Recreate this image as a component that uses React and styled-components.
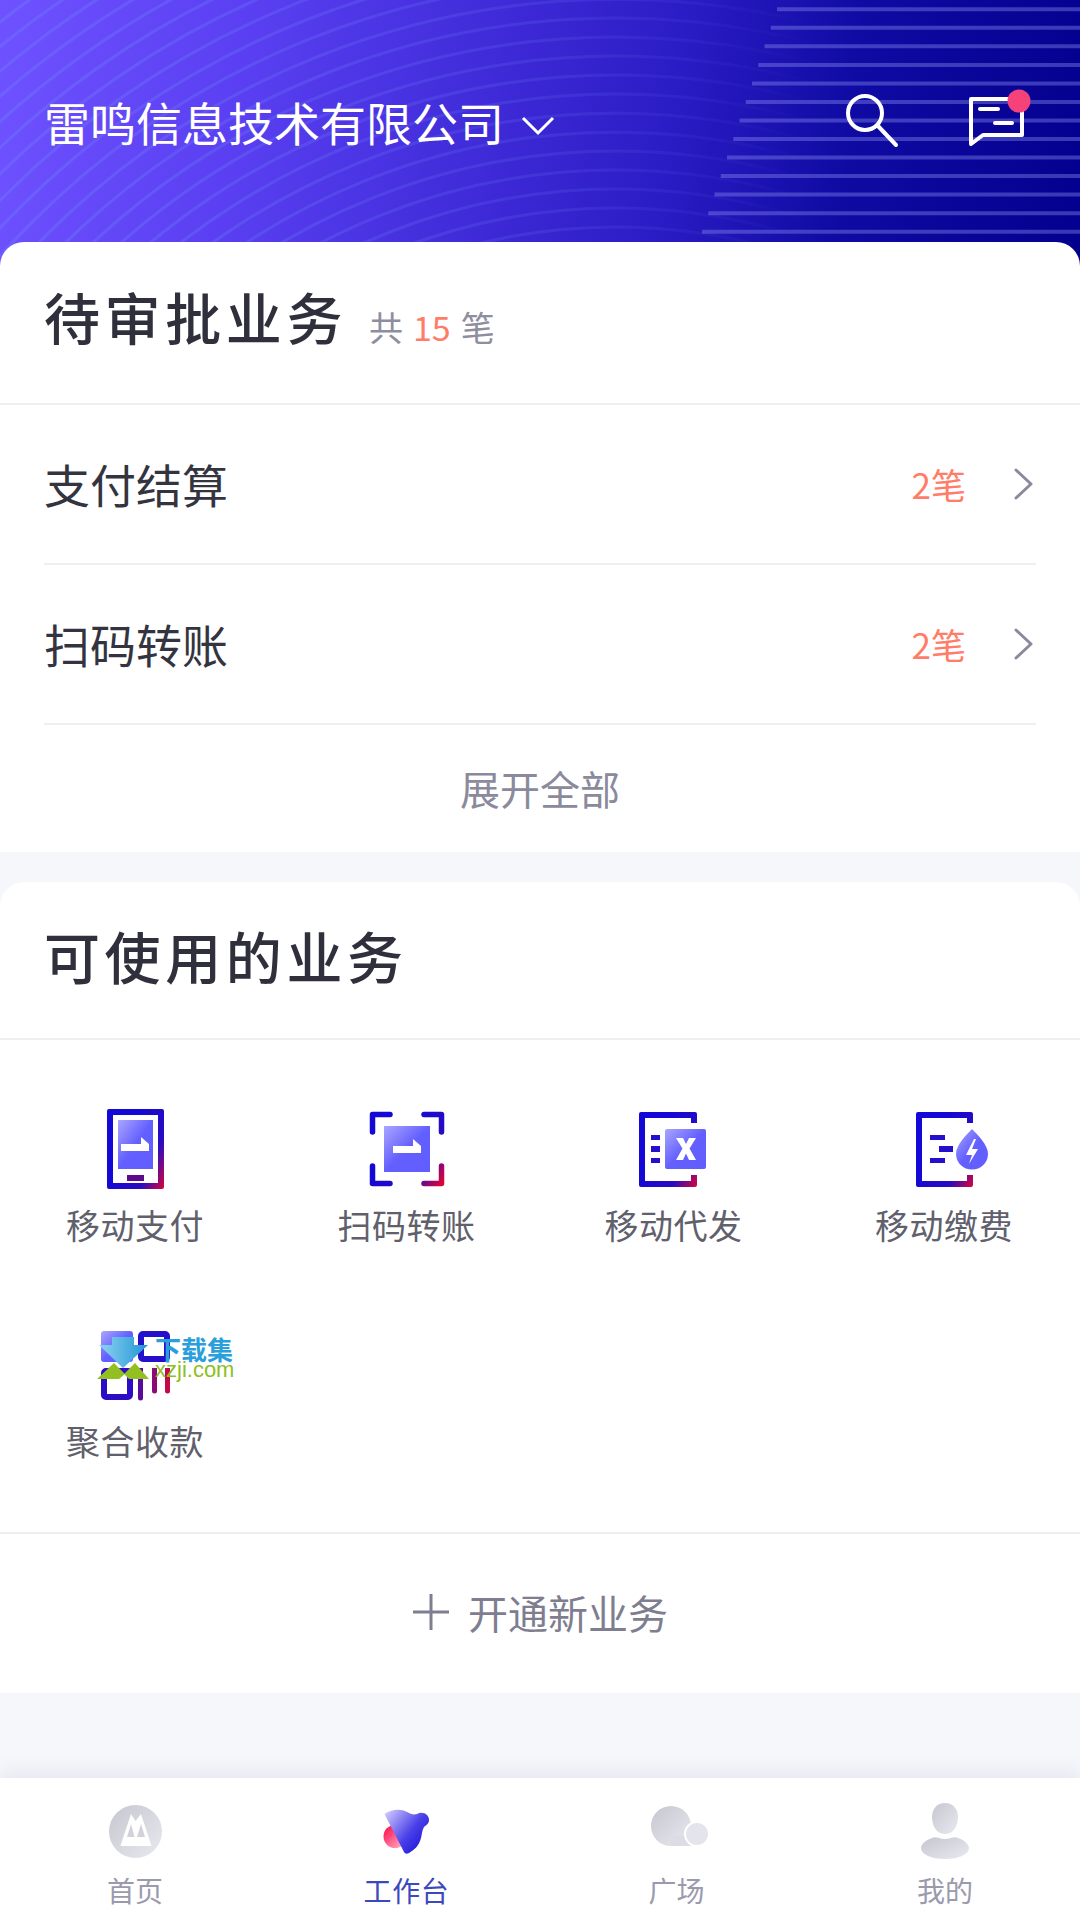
import React from "react";
import styled, { createGlobalStyle } from "styled-components";

const Global = createGlobalStyle`
  html, body { margin: 0; padding: 0; background: #f6f7fb; }
  * { box-sizing: border-box; }
  body { font-family: "Noto Sans CJK SC", "Noto Sans", sans-serif; }
`;

const Page = styled.div`
  width: 1080px;
  height: 1920px;
  overflow: hidden;
  display: flex;
  flex-direction: column;
  background: #f6f7fb;
`;

const Hero = styled.header`
  position: relative;
  height: 266px;
  flex: none;
  margin-bottom: -24px;
  padding: 0 44px;
  display: flex;
  align-items: flex-start;
  justify-content: space-between;
  background: linear-gradient(98deg, #6f52ff 0%, #5a40f2 22%, #3f2bd8 45%, #2a1cc4 62%, #0f0aa2 78%, #04008e 100%);
`;

const HeroArt = styled.svg`
  position: absolute;
  inset: 0;
  width: 1080px;
  height: 266px;
`;

const CompanyButton = styled.div`
  position: relative;
  height: 242px;
  display: flex;
  align-items: center;
  gap: 17px;
  color: #fff;
  font-size: 46px;
  line-height: 56px;
`;

const CompanyChevron = styled.svg`
  margin-top: 10px;
`;

const HeroActions = styled.div`
  position: relative;
  margin-top: 91px;
  display: flex;
  align-items: flex-start;
  gap: 61px;
`;

const ActionIcon = styled.svg`
  display: block;
  overflow: visible;
`;

const Card = styled.section`
  position: relative;
  flex: none;
  background: #fff;
  border-radius: 24px 24px 0 0;
`;

const SecondCard = styled(Card)`
  margin-top: 30px;
`;

const CardHead = styled.div`
  height: ${(p) => p.$h}px;
  padding: 0 44px ${(p) => p.$pb}px;
  display: flex;
  align-items: center;
  gap: 22px;
  border-bottom: 2px solid #eeeef3;
`;

const CardTitle = styled.h2`
  margin: 0;
  font-size: 56px;
  line-height: 70px;
  font-weight: 500;
  letter-spacing: 4.600px;
  color: #2f303b;
`;

const CountText = styled.div`
  padding-top: 21px;
  display: flex;
  gap: 10px;
  font-size: 34px;
  line-height: 44px;
  color: #8e8ea0;
`;

const CountNum = styled.span`
  color: #ff7d68;
`;

const Row = styled.div`
  height: 160px;
  margin: 0 44px;
  padding-bottom: 2px;
  display: flex;
  align-items: center;
  justify-content: space-between;
  border-bottom: 2px solid #eeeef3;
`;

const RowLabel = styled.div`
  font-size: 46px;
  line-height: 60px;
  color: #33343f;
`;

const RowMeta = styled.div`
  display: flex;
  align-items: center;
  gap: 47px;
  padding-right: 1px;
  font-size: 35px;
  color: #ff7d68;
`;

const RowChevron = styled.svg`
  margin-top: 2px;
`;

const Expand = styled.div`
  height: 127px;
  padding-bottom: 2px;
  display: flex;
  align-items: center;
  justify-content: center;
  font-size: 40px;
  color: #8a8a9c;
`;

const Grid = styled.div`
  height: 494px;
  padding-top: 64px;
  display: grid;
  grid-template-columns: 270px 273px 261px 280px;
  grid-auto-rows: 216px;
  align-content: start;
  border-bottom: 2px solid #eeeef3;
`;

const Tile = styled.div`
  position: relative;
  display: flex;
  flex-direction: column;
  align-items: center;
  font-size: 34px;
  line-height: 44px;
  letter-spacing: 0.500px;
  color: #5f606c;
`;

const TileIcon = styled.svg`
  width: 90px;
  height: 90px;
  margin-bottom: 9px;
`;

const OpenNew = styled.div`
  height: 159px;
  padding-bottom: 3px;
  display: flex;
  align-items: center;
  justify-content: center;
  gap: 18px;
  font-size: 40px;
  color: #7e7e90;
`;

const Spacer = styled.div`
  flex: 1;
`;

const TabBar = styled.nav`
  position: relative;
  flex: none;
  height: 142px;
  display: grid;
  grid-template-columns: 270px 273px 267px 270px;
  background: #fff;
  box-shadow: 0 -6px 18px rgba(120, 120, 170, 0.13);
`;

const Tab = styled.div`
  display: flex;
  flex-direction: column;
  align-items: center;
  padding-top: 22px;
  font-size: 28px;
  line-height: 36px;
  letter-spacing: ${(p) => (p.$active ? "0.600px" : "0")};
  color: ${(p) => (p.$active ? "#3c48bd" : "#9a9aac")};
`;

const TabIcon = styled.svg`
  width: 70px;
  height: 64px;
  margin-bottom: 8px;
`;

const WatermarkArt = styled.svg`
  position: absolute;
  left: 97px;
  top: 17px;
  width: 52px;
  height: 42px;
`;

const WatermarkText = styled.div`
  position: absolute;
  left: 155px;
  top: 17px;
  display: flex;
  flex-direction: column;
  align-items: flex-start;
`;

const WatermarkCn = styled.span`
  font-size: 26px;
  line-height: 24px;
  font-weight: 700;
  letter-spacing: 0;
  color: #2a9fdc;
`;

const WatermarkEn = styled.span`
  font-family: "Liberation Sans", sans-serif;
  font-size: 22px;
  line-height: 18px;
  letter-spacing: 0;
  color: #8dbf1f;
`;

const lineRows = Array.from({ length: 13 }, (_, i) => ({ y: 9.300 + i * 18.530, x: 777 - i * 6.250 }));
const arcs = Array.from({ length: 40 }, (_, i) => 540 + i * 19);

const Hook = ({ x, y }) => (
  <path d={`M${x} ${y}h28v-7l-8-7v7h-20z`} fill="#fff" />
);

const Defs = ({ id }) => (
  <defs>
    <linearGradient id={`${id}s`} x1="0.25" y1="0.5" x2="1" y2="1">
      <stop offset="0" stopColor="#1408d6" />
      <stop offset="0.6" stopColor="#2a0cc0" />
      <stop offset="1" stopColor="#d9053a" />
    </linearGradient>
    <linearGradient id={`${id}f`} x1="0" y1="0" x2="1" y2="1">
      <stop offset="0" stopColor="#aaa6ff" />
      <stop offset="0.5" stopColor="#6460ff" />
      <stop offset="1" stopColor="#605cff" />
    </linearGradient>
  </defs>
);

const PhoneIcon = () => (
  <TileIcon viewBox="0 0 90 90">
    <Defs id="a" />
    <path d="M17 7a2 2 0 0 1 2-2h53a2 2 0 0 1 2 2v76a2 2 0 0 1-2 2H19a2 2 0 0 1-2-2z M23 11v68h45V11z" fill="url(#as)" fillRule="evenodd" />
    <rect x="28" y="16" width="35" height="49" fill="url(#af)" />
    <Hook x="31" y="47" />
    <rect x="37" y="71" width="17" height="6" fill="#5c0a90" />
  </TileIcon>
);

const ScanIcon = () => (
  <TileIcon viewBox="0 0 90 90">
    <Defs id="b" />
    <path d="M28 10.500H10.500V28M62 10.500H79.500V28M10.500 62V79.500H28M62 79.500H79.500V62" fill="none" stroke="url(#bs)" strokeWidth="5.500" strokeLinecap="round" strokeLinejoin="round" />
    <rect x="22" y="22" width="46" height="46" fill="url(#bf)" />
    <Hook x="31" y="49" />
  </TileIcon>
);

const DocIcon = () => (
  <TileIcon viewBox="0 0 90 90">
    <Defs id="c" />
    <path d="M10 10a2 2 0 0 1 2-2h54a2 2 0 0 1 2 2v9h-6V14H16v63h46v-6h6v10a2 2 0 0 1-2 2H12a2 2 0 0 1-2-2z" fill="url(#cs)" />
    <rect x="36" y="25" width="41" height="40" rx="2" fill="url(#cf)" />
    <path d="M47 34h7l3 6 3-6h7l-6.500 10.500L67 56h-7l-3-6.500L54 56h-7l6.500-11.500z" fill="#fff" />
    <path d="M22 31h9v5h-9zM22 42h9v6h-9zM22 54h9v5h-9z" fill="#2410cc" />
  </TileIcon>
);

const FeeIcon = () => (
  <TileIcon viewBox="0 0 90 90">
    <Defs id="d" />
    <path d="M17 10a2 2 0 0 1 2-2h53a2 2 0 0 1 2 2v9h-6V14H23v63h45v-6h6v10a2 2 0 0 1-2 2H19a2 2 0 0 1-2-2z" fill="url(#ds)" />
    <path d="M31 31h15v5H31zM40 42h14v6H40zM31 54h15v5H31z" fill="#2410cc" />
    <path d="M73 25c6 6 16 16 16 25a16 15.500 0 0 1-32 0c0-9 10-19 16-25z" fill="url(#df)" />
    <path d="M75 35l-8 16h6l-3 9 9-15h-6l4-10z" fill="#fff" />
  </TileIcon>
);

const MergeIcon = () => (
  <TileIcon viewBox="0 0 90 90">
    <Defs id="e" />
    <rect x="11" y="11" width="32" height="31" rx="3" fill="url(#ef)" />
    <rect x="51" y="14" width="26" height="25" rx="2" fill="none" stroke="#2410cc" strokeWidth="6" />
    <rect x="14" y="51" width="26" height="26" rx="2" fill="none" stroke="#2c0cc4" strokeWidth="6" />
    <path d="M48 48h5v30a2.500 2.500 0 0 1-5 0z" fill="#5a0a9a" />
    <path d="M62 48h5v23a2.500 2.500 0 0 1-5 0z" fill="#8a0a78" />
    <path d="M75 48h5v23a2.500 2.500 0 0 1-5 0z" fill="#c40848" />
  </TileIcon>
);

const tiles = [
  { label: "移动支付", Icon: PhoneIcon },
  { label: "扫码转账", Icon: ScanIcon },
  { label: "移动代发", Icon: DocIcon },
  { label: "移动缴费", Icon: FeeIcon },
];

const Chevron = () => (
  <RowChevron width="22" height="34" viewBox="0 0 22 34">
    <path d="M3 3l15 14L3 31" fill="none" stroke="#8a8a9e" strokeWidth="3" strokeLinecap="round" strokeLinejoin="round" />
  </RowChevron>
);

const TabDefs = ({ id }) => (
  <defs>
    <linearGradient id={id} x1="0" y1="0" x2="1" y2="1">
      <stop offset="0" stopColor="#c6c6d0" />
      <stop offset="1" stopColor="#e9e9f0" />
    </linearGradient>
  </defs>
);

export default function App() {
  return (
    <Page>
      <Global />
      <Hero>
        <HeroArt viewBox="0 0 1080 266">
          <defs>
            <linearGradient id="arcFade" gradientUnits="userSpaceOnUse" x1="0" y1="0" x2="820" y2="0">
              <stop offset="0" stopColor="#6f8cff" stopOpacity="0.28" />
              <stop offset="0.7" stopColor="#7a90ff" stopOpacity="0.13" />
              <stop offset="1" stopColor="#7a90ff" stopOpacity="0" />
            </linearGradient>
          </defs>
          <g fill="none" stroke="url(#arcFade)" strokeWidth="3">
            {arcs.map((r) => (
              <path key={r} d={`M${616 - r} 805A${r} ${r} 0 0 1 ${616 + r} 805`} />
            ))}
          </g>
          <g stroke="#8487ee" strokeOpacity="0.42" strokeWidth="4">
            {lineRows.map((l) => (
              <line key={l.y} x1={l.x} y1={l.y} x2="1080" y2={l.y} />
            ))}
          </g>
        </HeroArt>
        <CompanyButton>
          雷鸣信息技术有限公司
          <CompanyChevron width="34" height="20" viewBox="0 0 34 20">
            <path d="M2 2l15 15L32 2" fill="none" stroke="#fff" strokeWidth="3" />
          </CompanyChevron>
        </CompanyButton>
        <HeroActions>
          <ActionIcon width="56" height="56" viewBox="0 0 56 56">
            <circle cx="22" cy="22" r="17" fill="none" stroke="#fff" strokeWidth="4" />
            <path d="M35 35l18 19" stroke="#fff" strokeWidth="4" strokeLinecap="round" />
          </ActionIcon>
          <ActionIcon width="76" height="62" viewBox="0 0 76 62">
            <path d="M11 8h51v36H23L11 53z" fill="none" stroke="#fff" strokeWidth="4" strokeLinejoin="round" />
            <path d="M20 18h18M35 32h17" stroke="#fff" strokeWidth="4" strokeLinecap="round" />
            <circle cx="59" cy="10" r="11.500" fill="#f5437a" />
          </ActionIcon>
        </HeroActions>
      </Hero>

      <Card>
        <CardHead $h={163} $pb={13}>
          <CardTitle>待审批业务</CardTitle>
          <CountText>
            <span>共</span>
            <CountNum>15</CountNum>
            <span>笔</span>
          </CountText>
        </CardHead>
        <Row>
          <RowLabel>支付结算</RowLabel>
          <RowMeta>2笔<Chevron /></RowMeta>
        </Row>
        <Row>
          <RowLabel>扫码转账</RowLabel>
          <RowMeta>2笔<Chevron /></RowMeta>
        </Row>
        <Expand>展开全部</Expand>
      </Card>

      <SecondCard>
        <CardHead $h={158} $pb={10}>
          <CardTitle>可使用的业务</CardTitle>
        </CardHead>
        <Grid>
          {tiles.map(({ label, Icon }) => (
            <Tile key={label}>
              <Icon />
              {label}
            </Tile>
          ))}
          <Tile>
            <MergeIcon />
            聚合收款
            <WatermarkArt viewBox="0 0 52 42">
              <defs>
                <linearGradient id="wm" x1="0" y1="0" x2="1" y2="0">
                  <stop offset="0" stopColor="#8fd3f0" />
                  <stop offset="1" stopColor="#1f95d6" />
                </linearGradient>
              </defs>
              <path d="M15 0h22v8h14L26 31 2 8h13z" fill="url(#wm)" />
              <path d="M0 42l17-16 11 11-6 5zM52 42L38 26 27 37l5 5z" fill="#92c020" />
            </WatermarkArt>
            <WatermarkText>
              <WatermarkCn>下载集</WatermarkCn>
              <WatermarkEn>xzji.com</WatermarkEn>
            </WatermarkText>
          </Tile>
        </Grid>
        <OpenNew>
          <svg width="38" height="38" viewBox="0 0 38 38">
            <path d="M19 1v36M1 19h36" stroke="#7e7e90" strokeWidth="3" />
          </svg>
          开通新业务
        </OpenNew>
      </SecondCard>

      <Spacer />

      <TabBar>
        <Tab>
          <TabIcon viewBox="0 0 70 64">
            <TabDefs id="t1" />
            <circle cx="35.500" cy="31.500" r="26.500" fill="url(#t1)" />
            <path d="M31 14l4.500 7L41 14l8 24 2.500 8h-31l2.500-8z" fill="#fff" />
            <path d="M27 37l4-13 3.500 13zM37 37l4-13 4 13z" fill="#d2d2da" />
          </TabIcon>
          首页
        </Tab>
        <Tab $active>
          <TabIcon viewBox="0 0 70 64">
            <defs>
              <linearGradient id="t2a" x1="0" y1="0" x2="1" y2="1">
                <stop offset="0" stopColor="#ff0040" />
                <stop offset="1" stopColor="#ffc0d8" />
              </linearGradient>
              <linearGradient id="t2b" x1="0" y1="0" x2="1" y2="0.800">
                <stop offset="0" stopColor="#d8d2ff" />
                <stop offset="0.600" stopColor="#4a40e8" />
                <stop offset="1" stopColor="#1a10d8" />
              </linearGradient>
            </defs>
            <circle cx="23" cy="36.500" r="11.500" fill="url(#t2a)" />
            <path d="M12.500 14C18 10 28 8 35 12C39 14 41 15 45 14C50 11 57 14 57 20C57 24 54 25 52 27C50 30 50 34 49 38C47 46 42 50 37 53C35 54 33 54 32 52Z" fill="url(#t2b)" />
          </TabIcon>
          工作台
        </Tab>
        <Tab>
          <TabIcon viewBox="0 0 70 64">
            <TabDefs id="t3" />
            <circle cx="29" cy="26" r="20" fill="url(#t3)" />
            <rect x="29" y="36" width="20" height="10" fill="#dcdce4" />
            <circle cx="55" cy="34" r="13" fill="#fff" />
            <circle cx="55" cy="34" r="11" fill="#e4e4ec" />
          </TabIcon>
          广场
        </Tab>
        <Tab>
          <TabIcon viewBox="0 0 70 64">
            <TabDefs id="t4" />
            <path d="M35 3c9 0 13 7 13 14 0 8-4 17-13 17S22 25 22 17C22 10 26 3 35 3z" fill="url(#t4)" />
            <path d="M22 38c4-2 7 1 13 1s9-3 13-1c7 2 11 7 11 10 0 6-9 11-24 11S11 54 11 48c0-3 4-8 11-10z" fill="url(#t4)" />
          </TabIcon>
          我的
        </Tab>
      </TabBar>
    </Page>
  );
}
